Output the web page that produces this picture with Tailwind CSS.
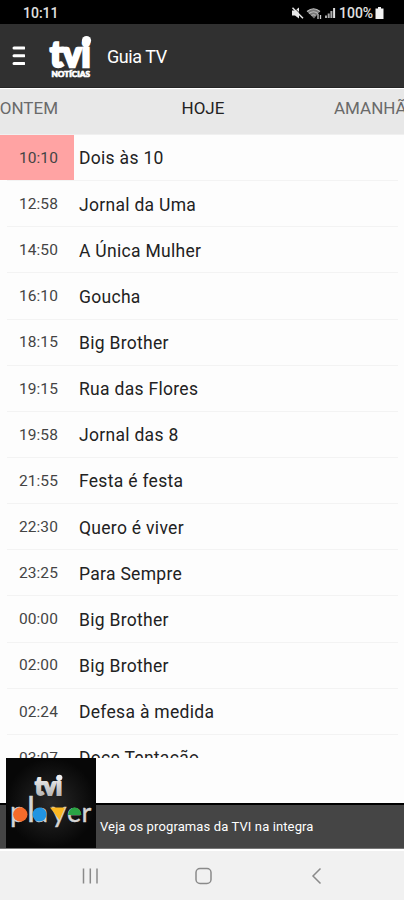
<!DOCTYPE html>
<html lang="pt">
<head>
<meta charset="utf-8">
<title>Guia TV</title>
<script src="https://cdn.jsdelivr.net/npm/@tailwindcss/browser@4"></script>
</head>
<body class="w-[404px] h-[900px] overflow-hidden bg-[#fdfdfd] font-[Roboto,sans-serif] flex flex-col">
<div class="h-6 shrink-0 bg-black flex items-center justify-between pl-[23px] pr-[20px] text-[#e0e0e0]">
  <span class="text-[14px] font-medium pt-[2px]">10:11</span>
  <div class="flex items-center pt-[2px]">
    <svg class="w-[13px] h-[13px]" viewBox="0 0 13 13"><path d="M1 3.500h3L8 .5v11L4 8.500H1z" fill="#e8e8e8"/><path d="M3 .5l10 10" stroke="#000" stroke-width="1"/><path d="M1.500 .8l10.500 10.500" stroke="#e8e8e8" stroke-width="1.500"/></svg>
    <svg class="w-[16px] h-[13px] ml-[2px]" viewBox="0 0 16 13"><path d="M1 4.500Q8-1 14 4.500L8 11.500z" fill="#777"/><path d="M1 4.500Q7.500-1 14 4.500M3 6.500q4.500-3.500 9 0M5.500 8.500q2-1.500 4 0" fill="none" stroke="#bbb" stroke-width="1.200"/><path d="M12 7v5M14.500 8v4" stroke="#ccc" stroke-width="1.300"/></svg>
    <svg class="w-[12px] h-[12px] ml-[2px]" viewBox="0 0 12 12"><path d="M1 8.500h2V11H1zM3.700 6.500h2V11h-2zM6.400 4h2v7h-2z" fill="#aaa"/><path d="M9.100 1h2v10h-2z" fill="#ddd"/></svg>
    <span class="text-[14px] font-medium ml-[3px] leading-none w-[36px]">100%</span>
    <svg class="w-[9px] h-[12px]" viewBox="0 0 9 12"><path d="M3 0h3v1.500h2.500V12H.5V1.500H3z" fill="#f2f2f2"/></svg>
  </div>
</div>
<header class="h-16 shrink-0 bg-[#303030] flex items-center border-b border-[#252525]">
  <svg class="w-[13px] h-[20px] ml-[12px]" viewBox="0 0 13 20"><path d="M2 2h10M2 9.700h10M2 17.500h10" stroke="#fff" stroke-width="3" stroke-linecap="round"/></svg>
  <svg class="w-[48px] h-[50px] ml-[22px]" viewBox="0 0 48 50" fill="#fff" stroke="#fff" font-family="Lato">
    <text x="3" y="35.500" font-size="36" font-weight="900" stroke-width="2.600" textLength="40.500" lengthAdjust="spacingAndGlyphs">tvi</text>
    <circle cx="39.500" cy="9.500" r="4.600" stroke="none"/>
    <text x="4.500" y="46" font-size="8.200" font-weight="900" stroke-width=".7" textLength="38.500" lengthAdjust="spacingAndGlyphs">NOTÍCIAS</text>
  </svg>
  <h1 class="text-[18px] text-white ml-[12px] tracking-[-0.45px] pt-[2px]">Guia TV</h1>
</header>
<nav class="h-[47px] shrink-0 bg-[#e8e8e8] border-t border-white border-b border-b-[#f0f0f0] flex text-[17px] leading-[39px] text-[#6a6a6a] whitespace-nowrap">
  <span class="w-[58px] flex justify-end">ONTEM</span>
  <span class="text-[#222] ml-[123.500px] w-[152.500px]">HOJE</span>
  <span class="w-[70px]">AMANHÃ</span>
</nav>
<main id="list" class="h-[623px] shrink-0 overflow-hidden text-[17.5px] text-[#222]"></main>
<div class="h-[45px] shrink-0"></div>
<footer class="relative h-[46px] shrink-0 bg-[#454545] border-t-2 border-black border-b border-b-[#777] flex items-center pl-[100px] text-[13px] text-white">
  <span class="tracking-[0.12px]">Veja os programas da TVI na integra</span>
  <svg class="absolute left-[6px] -top-[47px] w-[90px] h-[90px]" viewBox="0 0 90 90" font-family="Lato">
    <defs>
      <radialGradient id="bg"><stop offset="0" stop-color="#282828"/><stop offset="1" stop-color="#070707"/></radialGradient>
      <linearGradient id="m" x2="0" y2="1"><stop offset="0" stop-color="#fff"/><stop offset="1" stop-color="#aaa"/></linearGradient>
    </defs>
    <path d="M0 0h90v90H0z" fill="url(#bg)"/>
    <text x="29" y="37" font-size="24" font-weight="900" fill="url(#m)" stroke="url(#m)" stroke-width="1.800" textLength="27" lengthAdjust="spacingAndGlyphs">tvi</text>
    <circle cx="53.500" cy="19.500" r="2.800" fill="#eee"/>
    <text y="63.500" font-size="27" fill="#d4d4d4" stroke="#d4d4d4" stroke-width=".4"><tspan x="4" font-size="28">p</tspan><tspan x="21" font-size="34">l</tspan><tspan x="28.500" font-size="27">a</tspan><tspan x="45.500" font-size="29">y</tspan><tspan x="61" font-size="27">e</tspan><tspan x="75.500">r</tspan></text>
    <circle cx="14.300" cy="56.500" r="7.200" fill="#f36b2b"/>
    <circle cx="33.500" cy="56.500" r="7" fill="#2294e0"/>
    <path d="M44 49.500h15l-5.500 12.500z" fill="#fbb823"/>
    <path d="M62 57a6.700 7.500 0 0 1 13.400 0z" fill="#2aa444"/>
  </svg>
</footer>
<div class="grow bg-[#f1f1f1] border-t-2 border-white flex">
  <svg class="w-[404px] h-[49px]" viewBox="0 0 404 49" fill="none" stroke="#8a8a8a" stroke-width="1.500"><path d="M83.500 17.500v15M90.300 17.500v15M97 17.500v15"/><rect x="196" y="17.500" width="15" height="15" rx="4"/><path d="M320.500 17.500l-7.500 7.500 7.500 7.500"/></svg>
</div>
<script>
const shows = [["10:10","Dois às 10"],["12:58","Jornal da Uma"],["14:50","A Única Mulher"],["16:10","Goucha"],["18:15","Big Brother"],["19:15","Rua das Flores"],["19:58","Jornal das 8"],["21:55","Festa é festa"],["22:30","Quero é viver"],["23:25","Para Sempre"],["00:00","Big Brother"],["02:00","Big Brother"],["02:24","Defesa à medida"],["03:07","Doce Tentação"]];
document.getElementById("list").innerHTML = shows.map(([t, n], i) => `
<div class="relative h-[46.15px] flex">
  <div class="w-[74px] h-[45px] flex items-center justify-end pr-[16px] pt-[2px] text-[15.5px] tracking-[0.1px] text-[#444] ${i ? "" : "bg-[#ffa3a3]"}"><span>${t}</span></div>
  <div class="pl-[5px] h-[45px] grow pt-[2px] flex items-center tracking-[0.3px]"><span>${n}</span></div>
  <div class="absolute left-[7px] right-[6px] bottom-0 h-px bg-[#f3f3f3]"></div>
</div>`).join("");
</script>
</body>
</html>
